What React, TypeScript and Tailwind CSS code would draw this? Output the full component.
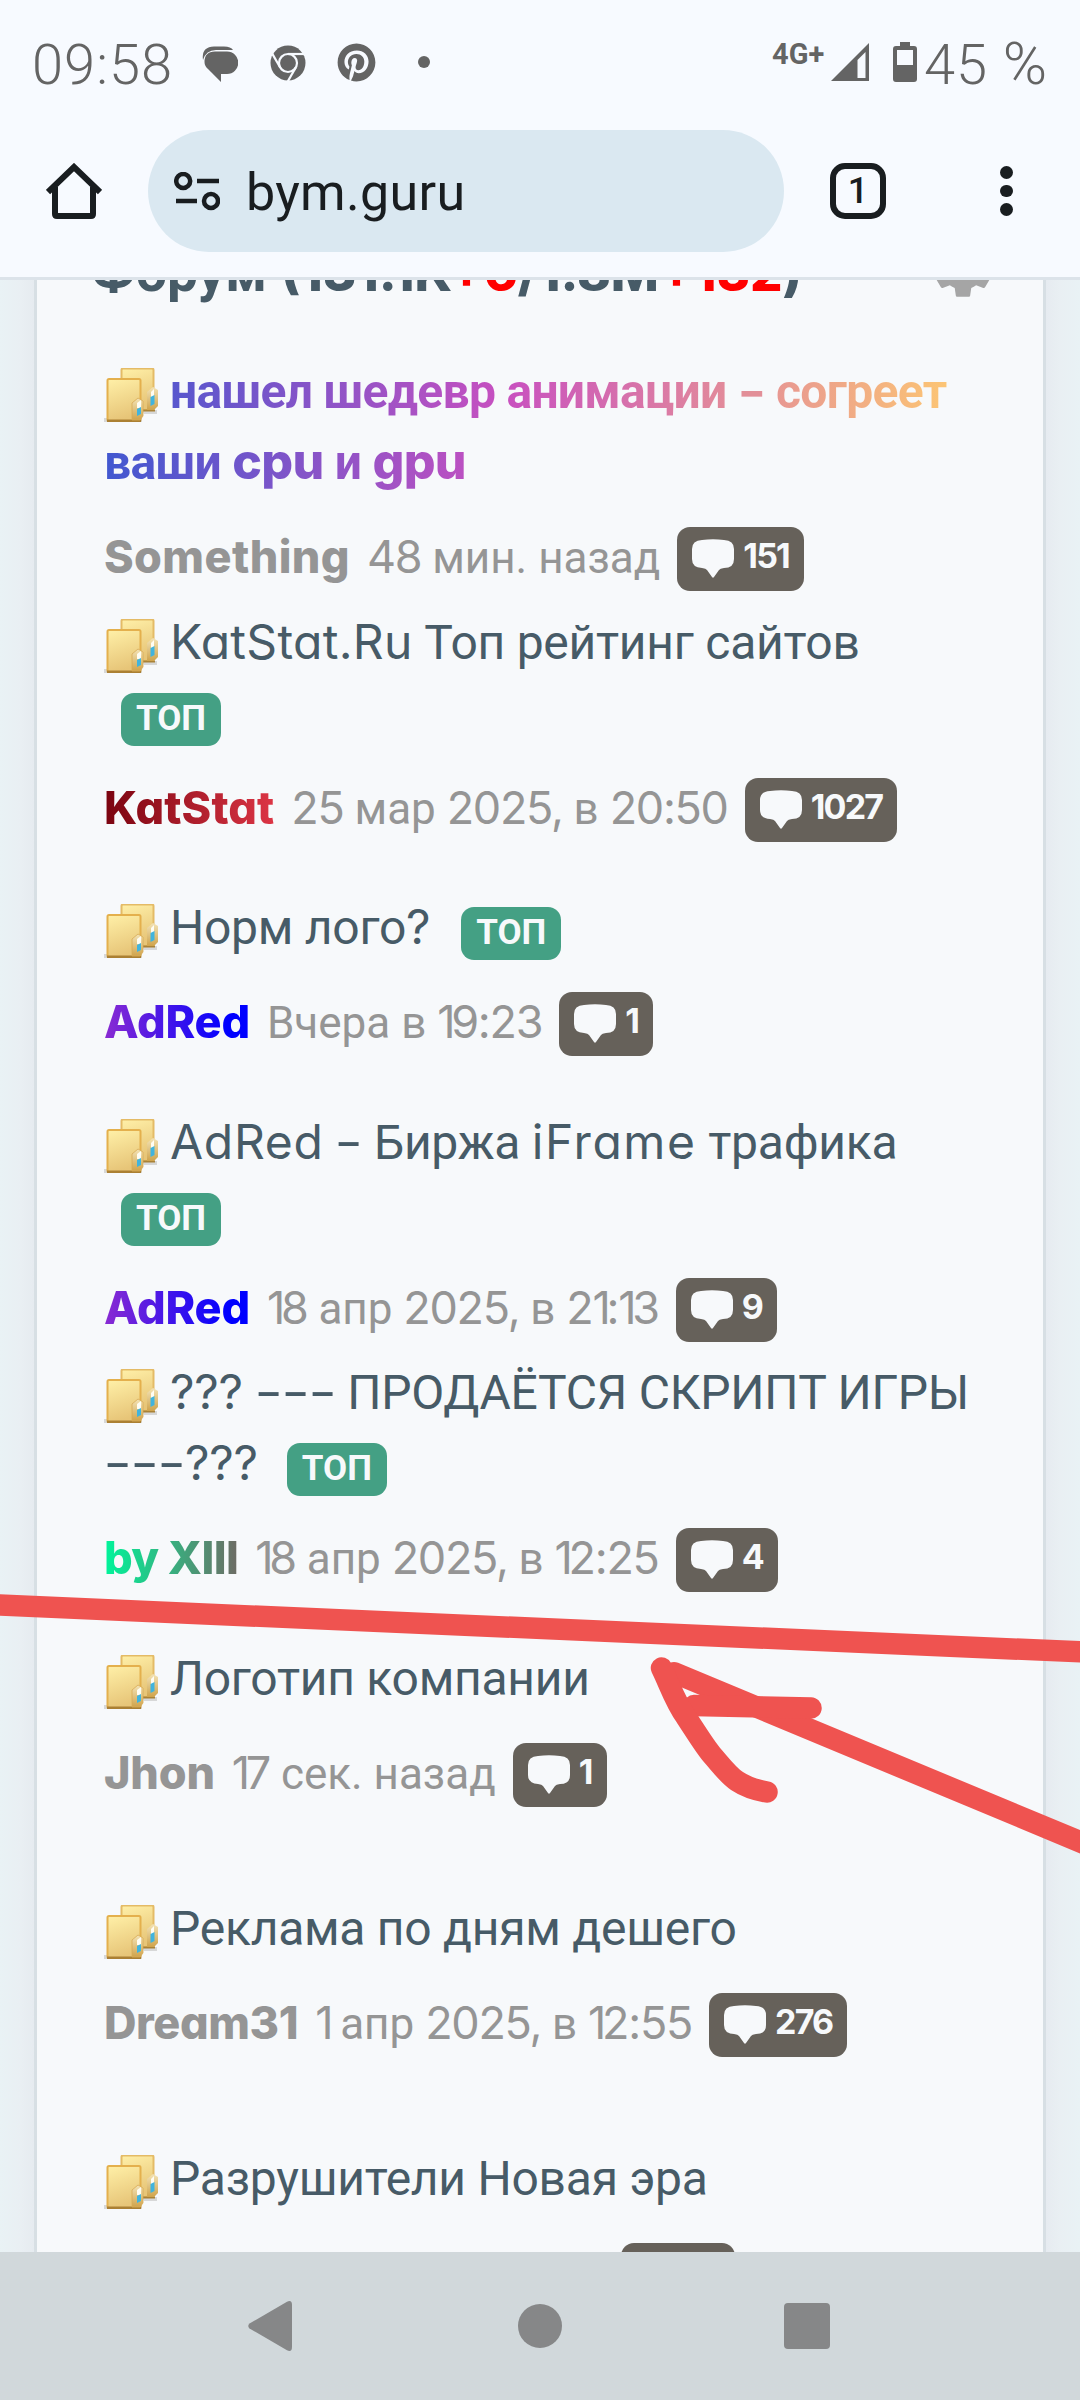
import type { ReactNode } from "react";
import { MdSettings } from "react-icons/md";
import { FaPinterest } from "react-icons/fa";

type Topic = {
  id: number;
  title: ReactNode;
  titleClass?: string;
  author: string;
  authorClass: string;
  date: ReactNode;
  count: number;
  gap: string;
};

// латиница и цифры идут другим шрифтом, кириллица — Roboto
function L({ children, className = "" }: { children: ReactNode; className?: string }) {
  return (
    <span className={`font-[Inter,sans-serif] [font-feature-settings:'cv11'] leading-none ${className}`}>
      {children}
    </span>
  );
}

// числа в датах: единица уже остальных цифр
function D({ children }: { children: string }) {
  return (
    <L className="text-[45px] tracking-[-1.3px]">
      {children.split("").map((ch, i) =>
        ch === "1" ? <span key={i} className="mr-[-3px]">1</span> : ch
      )}
    </L>
  );
}

// широкий дефис
function H({ className = "" }: { className?: string }) {
  return <L className={`inline-block w-[27px] text-center scale-x-[1.3] ${className}`}>-</L>;
}

function TopBadge({ className = "" }: { className?: string }) {
  return (
    <span
      className={`inline-block w-[100px] h-[53px] rounded-[13px] bg-[#44a084] text-[#f7f9fb] text-center text-[35px] leading-[51px] font-bold tracking-normal align-baseline ${className}`}
    >
      ТОП
    </span>
  );
}

const topics: Topic[] = [
  {
    id: 1,
    title: (
      <>
        нашел шедевр анимации <H className="text-[#e28f98]" /> согреет
        <br />
        ваши <L className="font-extrabold text-[50px]">cpu</L> и{" "}
        <L className="font-extrabold text-[50px]">gpu</L>
      </>
    ),
    titleClass:
      "font-bold tracking-[-0.7px] text-transparent bg-clip-text bg-[linear-gradient(90deg,#4158d0_0%,#c850c0_46%,#ffcc70_100%)]",
    author: "Something",
    authorClass: "text-[#959595] tracking-[0.4px]",
    date: <><D>48</D> мин. назад</>,
    count: 151,
    gap: "mb-[16px]",
  },
  {
    id: 2,
    title: (
      <>
        <L className="tracking-[0.3px]">KatStat.Ru</L> Топ рейтинг сайтов
        <br />
        <TopBadge className="ml-[17px]" />
      </>
    ),
    author: "KatStat",
    authorClass: "tracking-[0.1px] text-transparent bg-clip-text bg-[linear-gradient(90deg,#7a0410,#dc3545)]",
    date: <><D>25</D> мар <D>2025,</D> в <D>20:50</D></>,
    count: 1027,
    gap: "mb-[50px]",
  },
  {
    id: 3,
    title: <>Норм лого<L>?</L><TopBadge className="ml-[31px]" /></>,
    author: "AdRed",
    authorClass: "tracking-[-0.2px] text-transparent bg-clip-text bg-[linear-gradient(90deg,#8a2bd2,#0000ff_85%)]",
    date: <>Вчера в <D>19:23</D></>,
    count: 1,
    gap: "mb-[51px]",
  },
  {
    id: 4,
    title: (
      <>
        <L className="tracking-[0.7px]">AdRed</L> <H /> Биржа{" "}
        <L className="tracking-[1.6px]">iFrame</L> трафика
        <br />
        <TopBadge className="ml-[17px]" />
      </>
    ),
    author: "AdRed",
    authorClass: "tracking-[-0.2px] text-transparent bg-clip-text bg-[linear-gradient(90deg,#8a2bd2,#0000ff_85%)]",
    date: <><D>18</D> апр <D>2025,</D> в <D>21:13</D></>,
    count: 9,
    gap: "mb-[15px]",
  },
  {
    id: 5,
    title: (
      <>
        <L>???</L> <H /><H /><H /> ПРОДАЁТСЯ СКРИПТ ИГРЫ
        <br />
        <H /><H /><H /><L>???</L>
        <TopBadge className="ml-[29px]" />
      </>
    ),
    author: "by XIII",
    authorClass: "tracking-[-0.6px] text-transparent bg-clip-text bg-[linear-gradient(90deg,#00f59b,#6e6b64)]",
    date: <><D>18</D> апр <D>2025,</D> в <D>12:25</D></>,
    count: 4,
    gap: "mb-[51px]",
  },
  {
    id: 6,
    title: <>Логотип компании</>,
    author: "Jhon",
    authorClass: "text-[#959595] tracking-[-0.2px]",
    date: <><D>17</D> сек. назад</>,
    count: 1,
    gap: "mb-[86px]",
  },
  {
    id: 7,
    title: <>Реклама по дням дешего</>,
    author: "Dream31",
    authorClass: "text-[#959595] tracking-[-0.4px]",
    date: <><D>1</D> апр <D>2025,</D> в <D>12:55</D></>,
    count: 276,
    gap: "mb-[86px]",
  },
  {
    id: 8,
    title: <>Разрушители Новая эра</>,
    author: "Dream31",
    authorClass: "text-[#959595] tracking-[-0.4px]",
    date: <>Вчера в <D>20:45</D></>,
    count: 16,
    gap: "",
  },
];

export default function App() {
  return (
    <div className="relative w-[1080px] h-[2400px] overflow-hidden flex flex-col bg-[#f7faff] font-[Roboto,sans-serif]">
      <StatusBar />
      <BrowserBar />
      <main className="h-[1972px] flex overflow-hidden">
        <div className="w-[34px] bg-[linear-gradient(90deg,#e9f2f5,#e9eff3_60%,#e6ebf0)]" />
        <section className="w-[1012px] border-x-[3px] border-[#d7dfe4] bg-[#f7f9fb]">
          <div className="flex justify-between h-[119px] mt-[-43px] pl-[54px] pr-[44px]">
            <h2 className="text-[55px] leading-[71px] font-bold text-[#475b67] whitespace-nowrap">
              Форум{" "}
              <L className="font-extrabold text-[51px]">
                (131.1K<span className="text-[#ff0000]">+6</span>/1.8M
                <span className="text-[#ff0000]">+132</span>)
              </L>
            </h2>
            <MdSettings className="w-[72px] h-[72px] mt-[-5px] shrink-0 text-[#a5a5a5]" />
          </div>
          {topics.map((t) => (
            <TopicRow key={t.id} topic={t} />
          ))}
        </section>
        <div className="w-[34px] bg-[linear-gradient(270deg,#e9f2f5,#e9eff3_60%,#e6ebf0)]" />
      </main>
      <NavBar />
      <Scribble />
    </div>
  );
}

function TopicRow({ topic }: { topic: Topic }) {
  return (
    <article className={`pl-[67px] ${topic.gap}`}>
      <h3
        className={`w-[870px] text-[48px] leading-[71px] whitespace-nowrap ${
          topic.titleClass ?? "text-[#475b67] tracking-[-0.25px]"
        }`}
      >
        <FolderIcon />
        {topic.title}
      </h3>
      <div className="flex h-[64px] mt-[29px] text-[44px] leading-[63px] text-[#959595] whitespace-nowrap">
        <p>
          <L className={`font-extrabold text-[45px] ${topic.authorClass}`}>{topic.author}</L>
        </p>
        <p className="ml-[17px]">{topic.date}</p>
        <span className="ml-[17px] h-[64px] flex rounded-[13px] bg-[#66615a] px-[15px] text-[#f7f9fb]">
          <svg viewBox="0 0 42 39" className="w-[42px] h-[39px] mt-[12px] mr-[9px]" fill="currentColor">
            <path d="M10 1Q21-.6 32 1Q42 1.500 42 10V20Q42 29 32 29Q28 29.500 27 31L22 38Q21 39.500 20 38L15 31Q14 29.500 10 29Q0 28.500 0 20V10Q0 1.500 10 1Z" />
          </svg>
          <L className="font-bold text-[34px] tracking-[-1.8px] pt-[12px]">{topic.count}</L>
        </span>
      </div>
    </article>
  );
}

function FolderIcon() {
  return (
    <svg viewBox="0 0 54 54" className="inline-block w-[54px] h-[54px] align-[-14px] mr-[12px]">
      <defs>
        <linearGradient id="folder" x1="0" y1="0" x2="0.25" y2="1">
          <stop offset="0" stopColor="#fff0a8" />
          <stop offset="1" stopColor="#e7c578" />
        </linearGradient>
        <linearGradient id="shade" x1="0" y1="0" x2="0" y2="1">
          <stop offset="0" stopColor="#f3e3b6" />
          <stop offset="1" stopColor="#d0a44c" />
        </linearGradient>
      </defs>
      <path d="M38 42H53V46H40ZM0 50H38V54H0Z" fill="#9a9a98" opacity=".35" />
      <rect x="17.500" y="0.500" width="32" height="41.500" rx="1.500" fill="url(#folder)" stroke="#e4bb66" strokeWidth="2" />
      <path d="M39 42.500H51" stroke="#a98237" strokeWidth="2" />
      <path d="M43 42V24L49 19L54 22V38L50 42Z" fill="url(#shade)" />
      <path d="M47 24L50 21V30H47Z" fill="#fffdf3" />
      <path d="M46.500 29L50.500 27V36L46.500 38Z" fill="#41b4dd" />
      <rect x="3.500" y="11" width="33" height="42" rx="1.500" fill="url(#folder)" stroke="#e4b04d" strokeWidth="2" />
      <path d="M3 53H37" stroke="#ab8033" strokeWidth="3" />
      <path d="M28 52V35L34 30L39 33V48L36 52Z" fill="url(#shade)" stroke="#d8ab55" strokeWidth=".8" />
      <path d="M33 35L37 32V40H33Z" fill="#fffdf3" />
      <path d="M33 41L37 39V46L33 48Z" fill="#41b4dd" />
    </svg>
  );
}

function StatusBar() {
  return (
    <div className="h-[130px] flex items-center pl-[32px] text-[#646464]">
      <span className="text-[56px] leading-[130px] font-light tracking-[1px] w-[140px] whitespace-nowrap">09:58</span>
      <svg viewBox="0 0 36 36" className="w-[36px] h-[36px] ml-[30px] mb-[3px]" fill="currentColor">
        <path d="M1 14Q-1 1 12 .5H22Q29 .5 31 4H14Q4 4 1 14Z" />
        <path d="M13 5.500H25A11 11 0 0 1 25 28H19V36L6 23Q2.500 20 2.500 16Q2.500 5.500 13 5.500Z" />
      </svg>
      <svg viewBox="0 0 36 36" className="w-[36px] h-[36px] ml-[32px] mb-[5px]">
        <circle cx="18" cy="18" r="17.500" fill="currentColor" />
        <g stroke="#f7faff" strokeWidth="2.200" fill="none">
          <circle cx="18" cy="18" r="9" />
          <path d="M18 9H36" />
          <path d="M18 9H36" transform="rotate(120 18 18)" />
          <path d="M18 9H36" transform="rotate(240 18 18)" />
        </g>
      </svg>
      <FaPinterest className="w-[39px] h-[39px] ml-[31px] mb-[5px]" />
      <span className="w-[12px] h-[12px] rounded-full bg-current ml-[42px] mb-[6px]" />
      <span className="ml-[342px] mb-[22px] text-[29px] leading-none font-bold w-[56px] whitespace-nowrap">4G+</span>
      <svg viewBox="0 0 38 38" className="w-[38px] h-[38px] ml-[3px] mb-[6px]" fill="currentColor">
        <path fillRule="evenodd" d="M38 0V38H0ZM34.500 9L26.500 17V35H34.500Z" />
      </svg>
      <svg viewBox="0 0 24 40" className="w-[24px] h-[40px] ml-[24px] mb-[6px]" fill="currentColor">
        <path fillRule="evenodd" d="M7 0H17V4H21Q24 4 24 7V37Q24 40 21 40H3Q0 40 0 37V7Q0 4 3 4H7ZM4 8V23H20V8Z" />
      </svg>
      <span className="text-[56px] leading-[130px] font-light tracking-[1px] ml-[7px] whitespace-nowrap">
        45 <span className="text-[60px] leading-none">%</span>
      </span>
    </div>
  );
}

function BrowserBar() {
  return (
    <div className="h-[150px] shrink-0 flex items-start border-b-[3px] border-[#dce3ea] text-[#191d20]">
      <svg viewBox="0 0 56 56" className="w-[56px] h-[56px] ml-[46px] mt-[33px]" fill="none" stroke="currentColor" strokeWidth="6">
        <path d="M2 29L28 4L54 29" />
        <path d="M9 24V51Q9 53 11 53H45Q47 53 47 51V24" />
      </svg>
      <div className="ml-[46px] w-[636px] h-[122px] rounded-full bg-[#dae8f1] flex">
        <svg viewBox="0 0 46 39" className="w-[46px] h-[39px] ml-[26px] mt-[42px]" fill="none" stroke="currentColor" strokeWidth="4.500">
          <circle cx="9.200" cy="9" r="7" />
          <path d="M23 9H45M2 29H23" />
          <circle cx="37" cy="29" r="7" />
        </svg>
        <span className="ml-[26px] text-[52px] leading-[125px] tracking-[0.3px]">bym.guru</span>
      </div>
      <span className="ml-[46px] mt-[33px] w-[56px] h-[56px] rounded-[15px] border-[6px] border-current text-center text-[36px] leading-[44px] font-medium">
        1
      </span>
      <div className="ml-[114px] mt-[36px] flex flex-col gap-[6px]">
        <span className="w-[12.500px] h-[12.500px] rounded-full bg-current" />
        <span className="w-[12.500px] h-[12.500px] rounded-full bg-current" />
        <span className="w-[12.500px] h-[12.500px] rounded-full bg-current" />
      </div>
    </div>
  );
}

function NavBar() {
  return (
    <nav className="h-[148px] shrink-0 flex items-center bg-[#d1d8db] text-[#868788]">
      <svg viewBox="0 0 44 50" className="w-[44px] h-[50px] ml-[248px]" fill="currentColor">
        <path d="M39 .7Q44-1.500 44 4V46Q44 51.500 39 49.300L1.500 27.500Q-1 25 1.500 22.500Z" />
      </svg>
      <span className="w-[44px] h-[44px] rounded-full bg-current ml-[226px]" />
      <span className="w-[46px] h-[46px] rounded-[4px] bg-current ml-[222px]" />
    </nav>
  );
}

// пометки красным маркером поверх страницы
function Scribble() {
  return (
    <svg
      viewBox="0 1580 1080 300"
      className="absolute left-0 top-[1580px] w-[1080px] h-[300px]"
      fill="none"
      stroke="#ef5350"
      strokeWidth="21.500"
      strokeLinecap="round"
      strokeLinejoin="round"
    >
      <path d="M-15 1604.400L1095 1652.500" />
      <path d="M674 1672.700L1095 1848" />
      <path d="M694 1705.500L811 1708" />
      <path d="M661.500 1668C669 1683 675 1702 686 1717C694 1729 705 1747 712 1755C720 1764 728 1775 737 1781Q749 1789 767 1792" />
    </svg>
  );
}
